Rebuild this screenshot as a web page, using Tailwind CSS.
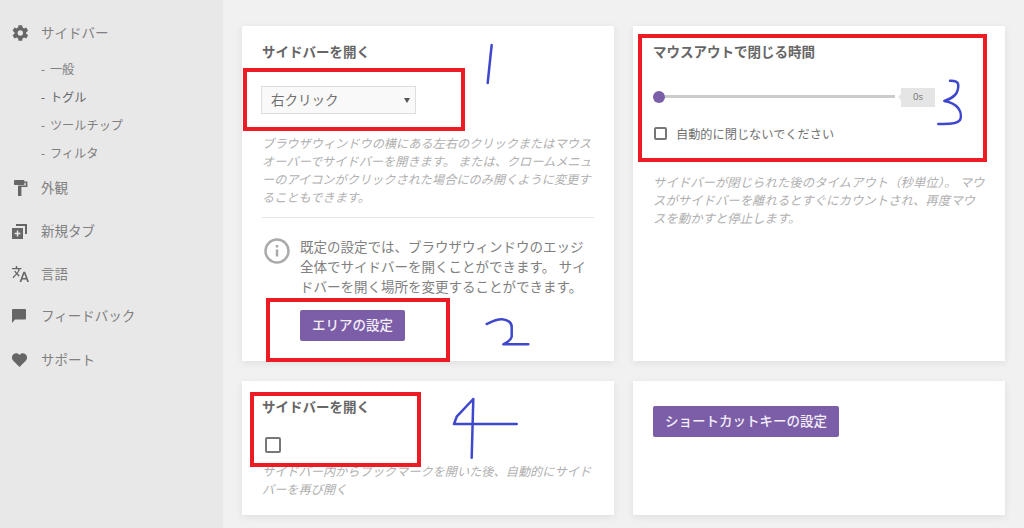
<!DOCTYPE html>
<html lang="ja">
<head>
    <meta charset="UTF-8">
    <meta name="viewport" content="width=device-width, initial-scale=1.0">
    <title>設定</title>
    <script src="https://cdn.jsdelivr.net/npm/@tailwindcss/browser@4"></script>
</head>
<body class="bg-[#f1f1f1] font-['Open_Sans','Noto_Sans_CJK_JP',sans-serif] text-[#707070]">
    <div class="relative flex h-[528px] w-[1024px] overflow-hidden">
        <!-- Sidebar -->
        <nav class="w-[223px] shrink-0 bg-[#e8e8e8] pt-[22px] text-[13.500px] text-[#808080]">
            <div class="flex h-[22px] items-center">
                <svg class="ml-[10px] h-[20px] w-[20px] fill-[#666]" viewBox="0 0 24 24"><path d="M19.400 13a7.600 7.600 0 0 0 0-2l2.300-1.800-2.200-3.800-2.700 1.100a7.600 7.600 0 0 0-1.800-1L14.600 2.600h-4.400L9.800 5.500a7.600 7.600 0 0 0-1.800 1L5.300 5.400 3.100 9.200 5.400 11a7.600 7.600 0 0 0 0 2l-2.300 1.800 2.200 3.800 2.700-1.100a7.600 7.600 0 0 0 1.800 1l.4 2.900h4.400l.4-2.900a7.600 7.600 0 0 0 1.800-1l2.700 1.100 2.200-3.800zM12.400 15.200a3.200 3.200 0 1 1 0-6.400 3.200 3.200 0 0 1 0 6.400z"/></svg>
                <span class="ml-[11px]">サイドバー</span>
            </div>
            <ul class="mt-[12px] ml-[41px] text-[12.200px]">
                <li class="flex h-[28px] items-center"><span class="mr-[5px]">-</span>一般</li>
                <li class="flex h-[28px] items-center text-[#666]"><span class="mr-[5px]">-</span>トグル</li>
                <li class="flex h-[28px] items-center"><span class="mr-[5px]">-</span>ツールチップ</li>
                <li class="flex h-[28px] items-center"><span class="mr-[5px]">-</span>フィルタ</li>
            </ul>
            <div class="mt-[9px] flex h-[22px] items-center">
                <svg class="ml-[14px] h-4 w-[14px] fill-[#666]" viewBox="0 0 14 16"><rect width="10.500" height="5" rx="1"/><path d="M10.500 1.500H13.400V7H7.400V16H4V5.500H11.800V3H10.500z"/></svg>
                <span class="ml-[13px]">外観</span>
            </div>
            <div class="mt-[21px] flex h-[22px] items-center">
                <svg class="ml-[12px] h-[15px] w-[15px] fill-[#666]" viewBox="0 0 15 15"><path d="M4 0h11v10h-2V2H4z"/><path fill-rule="evenodd" d="M0 4h11v11H0zM4.800 6.500v2.300H2.600v1.500h2.200v2.200h1.500v-2.200h2.200V8.800H6.300V6.500z"/></svg>
                <span class="ml-[14px]">新規タブ</span>
            </div>
            <div class="mt-[21px] flex h-[22px] items-center">
                <svg class="ml-[12px] h-[16px] w-[17px] fill-[#666]" viewBox="0 0 18 17"><path d="M4 0h1.500v2H10v1.500H8.300c-.5 1.800-1.300 3.200-2.300 4.400l2 2-.6 1.400-2.500-2.400L1.500 13 .5 12l3.700-3.700C3.400 7.300 2.800 6.300 2.300 5.200h1.600c.4.800.8 1.500 1.300 2.100.7-1 1.300-2.300 1.600-3.800H0V2h4zM12 6h2l4 11h-1.900l-.9-2.600h-4.400L9.900 17H8zm1 2.200-1.600 4.600h3.200z"/></svg>
                <span class="ml-[12px]">言語</span>
            </div>
            <div class="mt-[20px] flex h-[22px] items-center">
                <svg class="ml-[12px] h-[14px] w-[14px] fill-[#666]" viewBox="0 0 14 14"><path d="M1 0h12a1 1 0 0 1 1 1v8.500a1 1 0 0 1-1 1H3L0 14V1a1 1 0 0 1 1-1z"/></svg>
                <span class="ml-[15px]">フィードバック</span>
            </div>
            <div class="mt-[22px] flex h-[22px] items-center">
                <svg class="ml-[12px] h-[14px] w-[15px] fill-[#666]" viewBox="0 0 24 22"><path d="M12 22 2 12C-1 9-.5 4.500 2 2.200 5-.6 9.500-.4 12 3c2.500-3.400 7-3.600 10-.8 2.500 2.300 3 6.800 0 9.800z"/></svg>
                <span class="ml-[14px]">サポート</span>
            </div>
        </nav>

        <!-- Settings cards -->
        <main class="grid flex-1 grid-cols-[372px_372px] grid-rows-[335px_134px] gap-x-[19px] gap-y-[20px] pt-[26px] pl-[19px]">
            <section class="bg-white px-[20px] pt-[17px] shadow-[0_2px_8px_rgba(0,0,0,0.08)]">
                <h2 class="text-[13.500px] leading-[18px] font-semibold text-[#666]">サイドバーを開く</h2>
                <div class="mt-[25px] -ml-px flex h-[28px] w-[155px] items-center justify-between border border-[#ddd] bg-[#f9f9f9] pr-[5px] pl-[9px] text-[13.500px]">
                    <span>右クリック</span>
                    <span class="h-0 w-0 border-x-[3.500px] border-t-[5px] border-x-transparent border-t-[#555]"></span>
                </div>
                <p class="mt-[21px] text-[12.200px] leading-[18px] text-[#b0b0b0] italic">ブラウザウィンドウの横にある左右のクリックまたはマウスオーバーでサイドバーを開きます。 または、クロームメニューのアイコンがクリックされた場合にのみ開くように変更することもできます。</p>
                <hr class="mt-[10px] border-[#e6e6e6]">
                <div class="mt-[19px] flex">
                    <svg class="mt-[1px] ml-[2px] h-[26px] w-[26px] shrink-0 stroke-[#aaa]" viewBox="0 0 26 26" fill="none" stroke-width="2.500"><circle cx="13" cy="13" r="11.500"/><path d="M13 11.500v7M13 7v2.500"/></svg>
                    <div class="ml-[10px]">
                        <p class="w-[292px] text-[13.500px] leading-[20px] text-[#808080]">既定の設定では、ブラウザウィンドウのエッジ全体でサイドバーを開くことができます。 サイドバーを開く場所を変更することができます。</p>
                        <button class="mt-[13px] h-[31px] w-[105px] rounded-[2px] bg-[#7b5ea7] text-[13.500px] font-medium text-[#f3eef8]">エリアの設定</button>
                    </div>
                </div>
            </section>

            <section class="bg-white px-[20px] pt-[17px] shadow-[0_2px_8px_rgba(0,0,0,0.08)]">
                <h2 class="text-[13.500px] leading-[18px] font-semibold text-[#666]">マウスアウトで閉じる時間</h2>
                <div class="mt-[27px] flex h-[19px] items-center">
                    <span class="h-3 w-3 shrink-0 -translate-y-px rounded-full bg-[#7b5ea7]"></span>
                    <span class="h-[3px] w-[230px] -translate-y-px bg-[#ccc]"></span>
                    <span class="relative ml-[6px] flex h-[19px] w-[34px] items-center justify-center bg-[#e5e5e5] text-[9.500px]">
                        <span class="absolute top-[6px] -left-[3px] h-0 w-0 border-y-[3px] border-r-[3px] border-y-transparent border-r-[#e5e5e5]"></span>
                        0s
                    </span>
                </div>
                <label class="mt-[17px] ml-px flex items-center">
                    <span class="h-[13px] w-[13px] rounded-[2px] border-2 border-[#777]"></span>
                    <span class="ml-[9px] translate-y-[2px] text-[12.200px]">自動的に閉じないでください</span>
                </label>
                <p class="mt-[32px] text-[12.400px] leading-[18px] text-[#b0b0b0] italic">サイドバーが閉じられた後のタイムアウト（秒単位）。 マウスがサイドバーを離れるとすぐにカウントされ、再度マウスを動かすと停止します。</p>
            </section>

            <section class="bg-white px-[20px] pt-[17px] shadow-[0_2px_8px_rgba(0,0,0,0.08)]">
                <h2 class="text-[13.500px] leading-[18px] font-semibold text-[#666]">サイドバーを開く</h2>
                <span class="mt-[21px] ml-[3px] block h-4 w-4 rounded-[2px] border-2 border-[#777]"></span>
                <p class="mt-[10px] text-[12.200px] leading-[18px] text-[#b0b0b0] italic">サイドバー内からブックマークを開いた後、自動的にサイドバーを再び開く</p>
            </section>

            <section class="bg-white px-[20px] pt-[25px] shadow-[0_2px_8px_rgba(0,0,0,0.08)]">
                <button class="h-[31px] w-[186px] rounded-[2px] bg-[#7b5ea7] text-[13.500px] font-medium text-[#f3eef8]">ショートカットキーの設定</button>
            </section>
        </main>

        <!-- Red annotation boxes -->
        <div class="absolute top-[68px] left-[243px] h-[63px] w-[222px] border-4 border-[#ed1c24]"></div>
        <div class="absolute top-[298px] left-[266px] h-[64px] w-[184px] border-4 border-[#ed1c24]"></div>
        <div class="absolute top-[34px] left-[638px] h-[128px] w-[349px] border-4 border-[#ed1c24]"></div>
        <div class="absolute top-[392px] left-[250px] h-[75px] w-[171px] border-4 border-[#ed1c24]"></div>

        <!-- Handwritten numbers -->
        <svg class="absolute top-0 left-0 h-[528px] w-[1024px]" viewBox="0 0 1024 528" fill="none" stroke="#3f48cc" stroke-width="2.500" stroke-linecap="round" stroke-linejoin="round">
            <path d="M491.700 45 490.500 56 487.700 83"/>
            <path d="M486.700 324C491 322 497 319 502 319.300 508 320 511.700 322 511.700 327V336.700C511 340 506 343 503.300 344.300H528.300"/>
            <path d="M950 80.700C955 80.500 958.300 82 958.300 85 958.300 88 958 92 955 95 952 98 948 100 944.300 101 950 102 956 105 958.300 108.300 961 112 961.500 117 960 120 958 123 952 124.500 938.300 124"/>
            <path d="M473.300 399 456.700 416.700 454 424H516.700M473.300 399 471.700 457.700"/>
        </svg>
    </div>
</body>
</html>
